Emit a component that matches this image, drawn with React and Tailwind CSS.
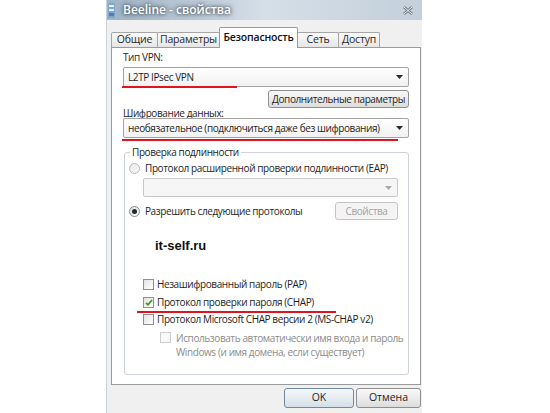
import React from 'react';

const Arrow = ({ disabled }) => (
  <svg width="7" height="4" viewBox="0 0 7 4">
    <path d="M0 0h7L3.5 4z" fill={disabled ? '#a9a9a9' : '#2a2a2a'} />
  </svg>
);

const Combo = ({ text, disabled, className }) => (
  <div
    className={
      disabled
        ? `flex items-center justify-between border border-[#c9c9c9] rounded-[2px] bg-[#f6f6f6] pl-[5px] pr-[5px] ${className}`
        : `flex items-center justify-between border border-[#a3a3a3] rounded-[2px] bg-gradient-to-b from-[#ffffff] to-[#f1f1f1] pl-[4px] pr-[5px] ${className}`
    }
  >
    <span className="leading-none whitespace-nowrap">{text}</span>
    <Arrow disabled={disabled} />
  </div>
);

const Button = ({ children, disabled, className }) => (
  <div
    className={
      disabled
        ? `flex items-center justify-center whitespace-nowrap border border-[#c5c5c5] rounded-[3px] bg-[#f4f4f4] text-[#a3a3a3] ${className}`
        : `flex items-center justify-center whitespace-nowrap border border-[#8f8f8f] rounded-[3px] bg-gradient-to-b from-[#f8f8f8] via-[#ececec] to-[#dcdcdc] ${className}`
    }
  >
    {children}
  </div>
);

const Radio = ({ checked, muted }) => (
  <div
    className={
      muted
        ? 'w-[11px] h-[11px] shrink-0 rounded-full border border-[#b9b9b9] bg-gradient-to-br from-[#e6e6e6] to-[#fbfbfb] flex items-center justify-center'
        : 'w-[11px] h-[11px] shrink-0 rounded-full border border-[#8a8a8a] bg-gradient-to-br from-[#dcdcdc] to-[#ffffff] flex items-center justify-center'
    }
  >
    {checked && <div className="w-[5px] h-[5px] rounded-full bg-[#1f2a33]" />}
  </div>
);

const Check = ({ checked, disabled }) => (
  <div
    className={
      disabled
        ? 'w-[11px] h-[11px] shrink-0 border border-[#cdcdcd] bg-[#f8f8f8] flex items-center justify-center'
        : 'w-[11px] h-[11px] shrink-0 border border-[#8f8f8f] bg-gradient-to-br from-[#e3e3e3] to-[#ffffff] flex items-center justify-center'
    }
  >
    {checked && (
      <svg width="8" height="7" viewBox="0 0 8 7">
        <path d="M1 3.8 L3 5.8 L7 1" stroke="#3f9a26" strokeWidth="1.8" fill="none" />
      </svg>
    )}
  </div>
);

const Tab = ({ label, active, className }) => (
  <div
    className={
      active
        ? `relative z-10 h-[21px] -mb-px -ml-px flex items-start justify-center pt-[2px] whitespace-nowrap border border-b-0 border-[#9a9a9a] rounded-t-[2px] bg-white text-[10.5px] font-semibold text-[#111] ${className}`
        : `h-[15px] -ml-px flex items-center justify-center whitespace-nowrap border border-b-0 border-[#a6a6a6] rounded-t-[2px] bg-gradient-to-b from-[#fbfbfb] to-[#e6e6e6] text-[10.5px] text-[#2a2a2a] ${className}`
    }
  >
    {label}
  </div>
);

export default function App() {
  return (
    <div className="w-[550px] h-[413px] overflow-hidden bg-white font-['Open_Sans','Noto_Sans',sans-serif] text-[10px] tracking-[-0.4px] text-[#1e1e1e] whitespace-nowrap">
      <div className="ml-[106px] w-[316px] h-[413px] bg-[#f0f0f0] flex flex-col border-l border-[#cbd3da]">
        {/* заголовок окна */}
        <div className="h-[20px] flex items-center bg-gradient-to-r from-[#9fb3c5] via-[#d5dfe8] to-[#c3cfda]">
          <svg width="7" height="15" viewBox="0 0 7 15" className="ml-[1px]">
            <rect x="0" y="0" width="7" height="15" fill="#7fa6cf" />
            <rect x="1" y="2" width="5" height="2" fill="#e8f1fa" />
            <rect x="1" y="6" width="5" height="2" fill="#e8f1fa" />
            <rect x="1" y="10" width="5" height="3" fill="#4f7fb3" />
          </svg>
          <span className="ml-[8px] text-[12px] font-semibold tracking-normal text-white [text-shadow:0_0_3px_#3b4652,0_0_6px_#4b5866]">
            Beeline - свойства
          </span>
          <div className="flex-1" />
          <svg width="12" height="9" viewBox="0 0 12 9" className="mr-[8px]">
            <path d="M2 1 L10 8 M10 1 L2 8" stroke="#6d7680" strokeWidth="2.6" />
            <path d="M2 1 L10 8 M10 1 L2 8" stroke="#f2f4f6" strokeWidth="1" />
          </svg>
        </div>

        {/* вкладки */}
        <div className="flex items-end h-[20px] mt-[7px] pl-[5px] tracking-[-0.2px]">
          <Tab label="Общие" className="w-[47px]" />
          <Tab label="Параметры" className="w-[63px]" />
          <Tab label="Безопасность" active className="w-[79px]" />
          <Tab label="Сеть" className="w-[42px]" />
          <Tab label="Доступ" className="w-[42px]" />
        </div>

        {/* содержимое вкладки */}
        <div className="ml-[4px] w-[310px] h-[338px] border border-[#9a9a9a] bg-white px-[11px] pt-[3px] flex flex-col">
          <div className="h-[13px] leading-[13px]">Тип VPN:</div>
          <div className="relative mt-[3px]">
            <Combo text="L2TP IPsec VPN" className="h-[20px]" />
            <div className="absolute left-[-1px] top-[19px] w-[115px] h-[2px] bg-[#e0141e]" />
          </div>
          <div className="flex justify-end mt-[3px]">
            <Button className="w-[141px] h-[18px]">Дополнительные параметры</Button>
          </div>
          <div className="h-[10px] leading-[10px]">Шифрование данных:</div>
          <div className="relative">
            <Combo text="необязательное (подключиться даже без шифрования)" className="h-[20px]" />
            <div className="absolute left-[-1px] top-[21px] w-[276px] h-[2px] bg-[#e0141e]" />
          </div>

          {/* группа проверки подлинности */}
          <div className="relative mt-[14px] ml-[1px] w-[285px] h-[223px] border border-[#cdd3d8] rounded-[3px] pl-[4px] flex flex-col">
            <span className="absolute -top-[7px] left-[5px] px-[2px] bg-white leading-[13px]">
              Проверка подлинности
            </span>
            <div className="mt-[9px] h-[13px] flex items-center gap-[5px]">
              <Radio muted />
              <span>Протокол расширенной проверки подлинности (EAP)</span>
            </div>
            <Combo disabled text="" className="mt-[3px] ml-[14px] w-[255px] h-[19px]" />
            <div className="mt-[5px] h-[18px] pr-[10px] flex items-center justify-between">
              <div className="flex items-center gap-[5px]">
                <Radio checked />
                <span>Разрешить следующие протоколы</span>
              </div>
              <Button disabled className="w-[63px] h-[18px]">Свойства</Button>
            </div>
            <div className="mt-[19px] ml-[26px] h-[13px] leading-[13px] font-['Liberation_Sans',sans-serif] text-[13px] tracking-normal font-bold text-[#111]">
              it-self.ru
            </div>
            <div className="mt-[26px] ml-[14px] h-[13px] flex items-center gap-[3px]">
              <Check />
              <span>Незашифрованный пароль (PAP)</span>
            </div>
            <div className="relative mt-[5px] ml-[14px] h-[13px] flex items-center gap-[3px]">
              <Check checked />
              <span>Протокол проверки пароля (CHAP)</span>
              <div className="absolute left-[-6px] top-[15px] w-[199px] h-[2px] bg-[#e0141e]" />
            </div>
            <div className="mt-[4px] ml-[14px] h-[13px] flex items-center gap-[3px]">
              <Check />
              <span>Протокол Microsoft CHAP версии 2 (MS-CHAP v2)</span>
            </div>
            <div className="mt-[5px] ml-[31px] flex items-start gap-[5px] text-[#8b8b8b]">
              <div className="mt-[1px]">
                <Check disabled />
              </div>
              <span className="leading-[14px]">
                Использовать автоматически имя входа и пароль
                <br />
                Windows (и имя домена, если существует)
              </span>
            </div>
          </div>
        </div>

        {/* кнопки */}
        <div className="mt-[3px] flex justify-end gap-[2px] pr-[1px] text-[10.5px] tracking-normal">
          <div className="w-[70px] h-[20px] flex items-center justify-center border border-[#6f8aa0] rounded-[3px] bg-gradient-to-b from-[#f3f7fa] via-[#e6edf2] to-[#d5dfe7]">
            OK
          </div>
          <Button className="w-[65px] h-[20px]">Отмена</Button>
        </div>
      </div>
    </div>
  );
}
